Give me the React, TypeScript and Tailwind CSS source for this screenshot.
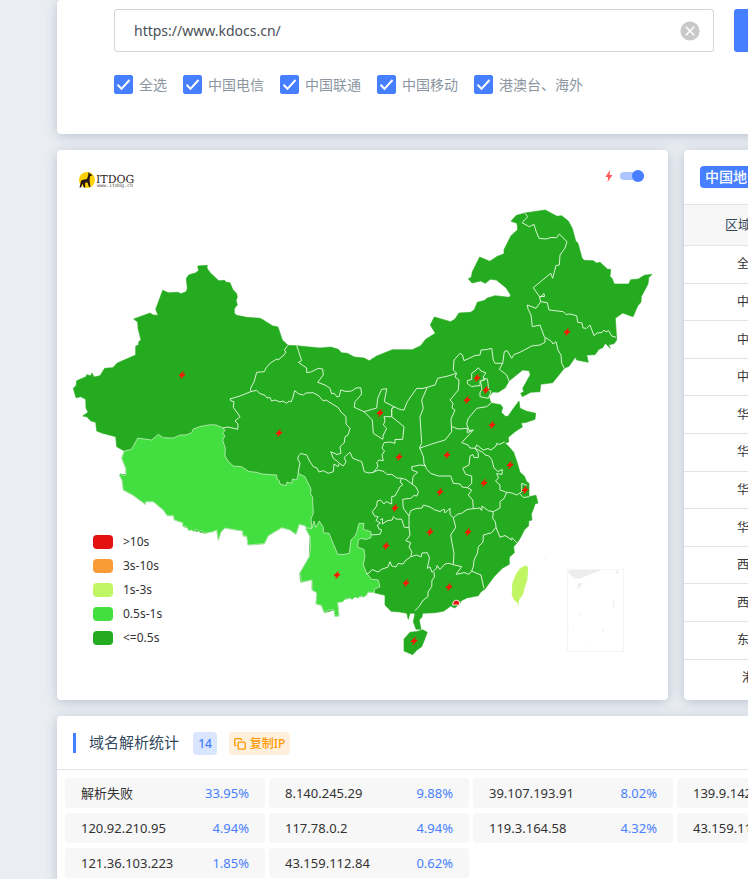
import React from "react";

const carriers = ["全选", "中国电信", "中国联通", "中国移动", "港澳台、海外"];

const regions = ["全国", "中国电信", "中国联通", "中国移动", "华北", "华东", "华中", "华南", "西南", "西北", "东北"];

const legend = [
  { color: "bg-[#e41111]", label: ">10s" },
  { color: "bg-[#f99b37]", label: "3s-10s" },
  { color: "bg-[#c0f563]", label: "1s-3s" },
  { color: "bg-[#43df40]", label: "0.5s-1s" },
  { color: "bg-[#25ab1f]", label: "<=0.5s" },
];

const stats: [string, string][] = [
  ["解析失败", "33.95%"],
  ["8.140.245.29", "9.88%"],
  ["39.107.193.91", "8.02%"],
  ["139.9.142", ""],
  ["120.92.210.95", "4.94%"],
  ["117.78.0.2", "4.94%"],
  ["119.3.164.58", "4.32%"],
  ["43.159.11", ""],
  ["121.36.103.223", "1.85%"],
  ["43.159.112.84", "0.62%"],
];

const mainland =
  "M73.3 388.3L76 385.7 76.7 380.7 86 376.7 86.7 374.7 90.7 375.7 92 373 94 377 100 375.7 104.7 368.3 112.7 367.7 117.3 363 135.7 355 135.7 346.3 138.7 344.7 138.7 341.7 141 340 138 328.3 137.7 322 133.7 319 150 313 153.3 315 158 315.3 155.7 309.3 162.7 290.3 168.3 292.7 178.3 292.3 180.7 293.7 186 291.7 187.3 288.3 186.3 278.3 189 274.7 195.3 273 198.5 270.7 197.7 266 207.3 265.3 207 268 209.5 272 215 277.3 218.7 280.7 224.7 280.3 225.7 282 230 282.7 232.7 289.3 236.7 293.7 237.3 297.7 236 300 237.3 304.7 234.3 308.7 234.3 313.3 236.7 315.3 246.7 317.3 260 318.3 263.3 320 272.3 325.7 278 327 281 336 282.3 340 288 345.3 296.7 345.7 320 348 330.7 347 338.3 349.3 341.3 352.7 347.3 353.3 354.3 357 364 358 369.3 360.7 376.7 356 392.3 349.7 412.3 349.7 420.7 345.7 425.7 339.3 435.3 333.3 430.3 325 434.3 317 450.7 321.7 455 319 459 313 470.7 312.3 474.3 309.7 477.3 302.3 485 300.3 486.7 298.3 495 295.7 509.3 297.3 510.7 295 506 287.7 496.3 280 490.3 279.3 485.3 283.3 480.7 281 472 283 468.3 278.7 471.3 277.3 472.3 271.7 479.7 257 489.7 261.3 497 256.5 504 253.7 504 249.7 511 235.7 517.7 229.7 517 223.3 511 221.3 516 215.5 525 213 545.3 210 557 216.3 561.7 215.7 568.3 221 572.3 228.3 575.7 241 578 243.3 580.3 251.7 582 258 584 260.3 593.3 260.7 596.7 263 600 262.3 607.7 269.3 610.7 269.3 610 276.7 612 278.3 614.3 284 628.7 284 630.7 279.7 638.3 279 644.3 275.3 652 274.3 648.7 277.7 648 284 641.3 296.7 641 302 637.7 306 633 316.7 622.7 313 615.3 318.3 616 328.3 616.7 340 614 343.7 608.7 344.7 610.3 348.3 605.3 343.3 602.7 347.7 599 349.3 595 354.7 586.7 355 588.3 362.3 576.7 360 575.3 357.3 569 366.3 564.3 368.3 552.7 382.7 540.7 384.3 540 391.7 530.7 392.3 522.3 396.7 520.7 393.3 523.7 391.7 522.7 388.3 530.3 374.7 529 370.7 522.7 370 508.7 381.3 505.3 387.7 498.3 392.3 492.7 392 489 396.7 491 403 500.7 404.7 502.7 407.7 501.3 412.3 505.3 416.3 508 416.3 513 409 519 401 520 408.3 526.7 411.3 535.7 413.3 535 419.3 526.7 422.3 521.3 423 522.3 427 516 431 508.3 437.3 508.7 442 504.7 443.3 507.3 445 513.7 452.3 517 462 520 472.3 524.3 476 526.7 481.7 529 483.3 529 496.7 536 495.3 538 503 535 504 533.3 509.3 531.3 514 532 520 528.7 521 528.7 525.7 524.3 530 521 536.7 519 540 516.7 543.3 513.7 546.7 514.3 552.7 509.3 557.3 509.3 564.3 502.3 568.3 494 576.7 485 589 481 591.7 478.3 595.7 466.7 598 461 601 459.3 604.3 454.7 608 450.7 606 444 611 435 612.7 422.7 613.3 422 617 419.3 620 421 629.3 416 629.3 413.3 621.7 415 613.3 410 613.3 408.3 619.3 406.7 613.3 400 612 391 611.3 385 605 385 595.3 374.3 592.7 368.3 592 366 595.7 355 597.3 345 599.3 337.7 602.7 339 616 334.7 616.3 334 610 324.3 612.7 321.3 605.3 316 604 316.7 592.7 312 590 312 580 300.7 582.3 299.7 573.3 309.3 556.7 310 536.7 305.3 526 299.3 524.3 296 534.3 290 530 281.7 527.7 268.3 535.7 264.3 543.7 248 545 246.7 536.3 243 536 242.7 531 236 530 225 528 221 532 218.3 540.3 216.7 530 205 533.3 191.7 530 182.7 526 182.7 522.7 174.3 520 173.3 515.7 167.3 515.7 163.3 510 153.3 501.7 145.7 501.7 145.3 504.3 132.7 495 123.3 490 122 480 119.3 475 126 474.3 125.7 468.3 121.7 458.3 124.3 451 116.7 446.7 115.7 436.7 102.7 433.3 96.7 431 95.7 422.3 91 421 86.7 416.7 82.7 416 88 412.3 86 408 85.7 399.3 80.7 396.7 76 397.7Z";

const tibet =
  "M124.3 451L131.7 449.3 137.7 438 151.7 440 158.3 434.3 163.3 437.7 173.3 438 180 435 186 435 191.7 432.7 193.3 429 200 426.5 210 424.7 216 425 223.3 428 225 430.7 222.7 433 225 436 222.7 440 225.3 448.3 225 456 228 461 233.3 466 241.7 466.7 249 471.5 256.7 472.3 262 474 276.7 475 277 479 279.3 480.7 280 484 286 485.7 287 482 291.7 483.3 292.5 479 296.7 480 298.3 473.3 305 476.7 311 489 310.5 494 312.5 497 313.3 513.3 311 519 312 528.3 306.7 529.3 305.3 526 299.3 524.3 296 534.3 290 530 281.7 527.7 268.3 535.7 264.3 543.7 248 545 246.7 536.3 243 536 242.7 531 236 530 225 528 221 532 218.3 540.3 216.7 530 213 532 205 533.3 201 530.5 199 532 196 529 194 532 191.7 530 188.5 531 187 527 182.7 526 182.7 522.7 174.3 520 173.3 515.7 167.3 515.7 163.3 510 153.3 501.7 145.7 501.7 145.3 504.3 132.7 495 123.3 490 122 480 119.3 475 121 473 124 476 126 474.3 125.7 468.3 121.7 458.3Z";

const yunnan =
  "M305 528L312 528.3 314 521 315.7 527.3 319.3 521 323.3 527.3 323.3 532.7 329 533.3 337.7 554.3 343 554.5 349.3 553.3 351 540 355 536 356.7 532.7 358 527 359 523.3 364 523.3 363.3 529.3 371 531.7 371 537.7 366 539.5 361 538.5 358.3 540 357.7 547.3 364 549.3 365 556.7 363.3 565 366.7 573.3 371.7 579.3 378.3 580 380 586.7 374.3 589.3 374.3 592.7 368.3 592 366 595.7 363.5 597.5 361 595.5 358 598.5 355 597.3 352 600 350 598 345 599.3 343 602 337.7 602.7 339 616 334.7 616.3 334 610 329 610 324.3 612.7 321.3 605.3 316 604 316.7 592.7 312 590 312 580 300.7 582.3 301 578 299.7 573.3 309.3 556.7 310.5 548 310 536.7Z";

// Provincial boundaries inside the mainland outline.
const borders = [
  "M288 345.3L284.3 350 286 352 284 355 278 360 276.7 359 270 363.3 266 368 264.3 371.7 256.7 372.3 254 382 250.7 388 250.7 391.7 240 396 230 399 231 401 234 401.7 233.3 407.3 240 416.7 235 421 238 424 237.7 429.3 228 427 222.7 428",
  "M250.7 391.7L256.7 390.3 259.3 393.3 265 395.3 267 398 270 397.5 271.7 401 275 400 280 402 283 401 286.7 403.3 289 401 291 402 292.7 398.3 294.7 390.7 299 394 303.3 395 306 393 313.3 392.7 319 396 323.3 401 326 400 330 402.5 338.3 407.7 341 412 346 416.7 346 424 350 428.3 348 435 345 436.7 344.3 442.7 340 446.7 341 453.3 337 454.5 330.7 451.7 333.3 458.3 337 461 339.3 463.3 338 466.7 334 464 333.3 471.7 328.3 473.3 323.3 470.7 319 472 317 468 313.3 466.7 309.5 461 306.7 455 301 453.5 298.3 456 297.8 459 300 463.3 298 473.3",
  "M296.7 345.7L301.7 360.7 298.3 362.3 306.7 368 306.7 372.7 311.7 371.7 318.3 368.3 322.7 369 323.3 375 317.7 382.3 325 385 330 388.3 331.7 394 334 393 337 397 339.3 396.3 340.7 390 346 391.5 351.7 391 356 388 360.7 387.7 361.7 394 355 401.7 354.3 407.3 364 411.7",
  "M364 411.7L376.7 408 377.7 398.3 381.7 389.3 386.7 388.7 384.3 401.7 394 406.7 391.7 409 391.7 416.7 384 416.7 385 421 383.3 425 386.7 428.3 383.3 435 382.7 439.3 373.3 433.3 372.3 420 369 416.5 364 411.7",
  "M391.7 416.7L404 426.7 402.7 439.3 395 439.5 395 443.3 390 442 384 442.7 382 448 384.5 451 382 455 383.3 460.7 379 460 376.7 462.7 378 466 376.7 468.3 373.3 472.3",
  "M339.3 463.3L343.3 466 346 462 344.3 457.3 350 452.3 352.7 458.3 361.7 461.7 364.3 471.7 369 473 373.3 472.3 378.3 470 384 471.5 387 474.5 391.7 474.3 397 478 401.7 478.3 406 479.5 412.3 484.3",
  "M401.7 478.3L400 482 403 484.5 400 486.7 395 496 391.7 496.5 391.7 504 386 501.5 384 504 380.5 500 377.3 501 376.7 506 372.3 511.7 374.5 516 378.3 516.7 376 520.5 380.5 523 377.3 525 379 529 381.7 530 380 534.3 371 535",
  "M380 520L382.5 518.5 382.5 524 385 522 388 520.5 392.3 520 393.3 516.5 396 519 401.7 519.3 404.3 527.3 409 527.7 409 516 403.3 508.3 402.7 499.3 410.7 498.3 414 495.5 417 496 418.3 491.7 416 487 412.3 484.3",
  "M409 527.7L410 535 408 538 405.7 540.7 409 542 410.7 542.7 409 547 412 552 410.7 556.7 405 561 403.3 564 398 563.5 396 567 391.7 566 390 561.7 388 567 381.7 569.3 378 572 372 569.5 369 573 366 574",
  "M410.7 556.7L416.7 555 421 557 422 553 427.3 552.7 429.5 558 427.3 568.3 430 567 432 572.3 436.7 568.3 437 565.5 440 569.5 445 564 449 563.3 453.3 564.7 461.7 566.7 456 574.3 461 573.5 464 572.5 469 574.3 471.7 571 476 573 481 575 482.5 582 484 588.3",
  "M434 572.3L434.5 577 432 580 431.7 586.7 428 592 428 596.7 423.3 600 419 606.5 415 610.7",
  "M409 516L410.7 510.7 416 508.5 422 508 423.3 505 430 507 435 510 440 511.5 444 509 445 513 450 508.3 450 514.5 453.3 517.7 458 514 461.7 513.3 467 509.5 473.3 508.7 472.7 500 468.3 495 471.7 490 467.3 487.7 462 487 460 484 453.3 483.3 450.7 476 438.3 476 431 473.5 426.7 469.3 424 463.3 423.5 457 420 448.3",
  "M425.7 465.7L420 465 411.7 466.7 412 470 417.7 472.3 413 476.5 412.3 484.3",
  "M419.3 448.3L421.7 443.3 420 416.7 423.3 408.3 421.7 400 427.3 387.3M391.7 416.7L391.7 409 394 406.7 400 409.5 404 410 407.3 401.7 416.7 388.3 422 388.5 427.3 387.3 435 385 437.7 378.3 448 376 456.7 373.3 455 377 459 380 458.3 390 450 400 453 403 452 408 455 410 451 419 451.7 431.7 445 440 431.7 444 419.3 448.3",
  "M456.7 373.3L453.3 370 454 360 460 353.3 462.5 355 464 360.7 475 355.5 480 355 481 350 487 349.5 491.7 348.3 493.3 360 495 363.3 502.7 363.3 499.3 369.3 506.7 375 509 381M502.7 363.3L504.3 351.7 507 350.5 511.7 358.3 514 354.5 520 352.3 531.7 346 540 345 545 342.3 545 337.3",
  "M491 403L486.7 406.7 476.7 408.3 472 414 468.3 418.3 466.7 424 469 430.5 473.3 430 461.7 442.7 468 445 470 448 475 448.3 476.7 445 483.3 450 488 448.5 491 450 496 446 496.7 443.3 499 444.5 504.7 442M451.7 426.5L458 429 467.3 428.3 467.3 432.7 473.3 430",
  "M475 448.3L478.3 453 478.3 457.5 474 457.5 473 454.5 470 456 469 465 462.7 468.3 465.7 474.3 471.7 476 471.7 483.3 467.3 487.7",
  "M475 448.3L483.3 452.7 485 455 489 456 491.7 459.3 494 468 498 471.5 502.3 469.5 502 474.5 496.7 473.5 498.5 478 495.5 481 500 485 500 490 506.7 492.3 512 493 516.7 495 521.7 491.7 521.7 483.3 527 485.5M520 494L523.3 497.5 529 496.7",
  "M506.7 492.3L504 498.5 500 501.7 500 508 493.3 511.7 488.3 510.7 482 506 481.7 510.5 480 508 473.3 508.7M493.3 511.7L492.7 518.3 495.5 522 496 527.3 500 537.3 505 535.5 511.7 540 512 537.7 516.7 542.7M496 527.3L491.7 532.7 483.3 535 483 542 478.3 546.7 477.5 553 474 560 473.5 566 471.7 571",
  "M453.3 517.7L455.7 527.3 450.7 535 452 543 454 553.3 453.3 564.7",
  "M525 213.3L527.7 216.7 522 222.7 529.3 226.7 534 224.3 536 231 539 238.3 546 239 551 237.5 556.7 237.7 559.3 234 567 241.7 565 248 560 255 559.3 265 556 265.5 552.7 278.3 550.7 273.3 533.3 287.7 540 297.3 544 293.5 544.5 296.5 539.5 296.5 540.7 301.7 547.3 302.7 549 310 563.3 311.7 566 314.5 570 314 576.7 315.7 577.7 322.3 582 323 583 328 586.5 328.3 590 325 594 335.7 597 333 602 332.5 604 330 606 332 608.5 330.5 611.7 336 616 337.3",
  "M540.7 301.7L536 308.3 530 306 527.3 305 528 309 531 315 532.3 326.7 540 325 544.3 336.7 551.7 341.7 553 344 556 341.7 558 350 561 355 561.7 363.3 564.3 368.3",
  "M471.7 373.3L475 371 478.3 367.7 481 371 486 373 483 377 485 380 480 381 480 385.7 475 386 471.7 386.7 467.3 383.5 467.5 380.5 471.7 379.5ZM480.7 381.7L484 378.5 487.3 379 488 383 488.5 390 491 391.5 488.3 398.3 480 396.7 480 392 482 390Z",
];

const nodes = [
  [182, 375], [279, 433], [380, 413], [399, 457], [395, 508], [386, 546], [337, 575], [406, 583],
  [430, 532], [440, 492], [447, 455], [467, 400], [477, 378], [486, 390], [492, 425], [510, 465],
  [484, 483], [525, 490], [468, 532], [449, 587], [414, 641], [567, 332],
];

const bolt = "M1.3 -3.8L-3 .4V1H-.6L-1.2 3.8 3 -.5V-1.100H.6Z";
const card = "bg-white rounded shadow-[0_2px_12px_rgba(45,65,105,0.25)]";

function ChinaMap() {
  return (
    <svg viewBox="57 150 611 550" className="block w-full" role="img" aria-label="中国地图">
      <g fill="#25ab1f" stroke="#25ab1f" strokeWidth=".6">
        <path d={mainland} />
        <path d="M404 639L410 632.3 417 631.5 422.7 629.7 427.3 632.3 424 641 421.7 646.7 417 650 412.7 654.7 404 651Z" />
      </g>
      <g fill="#43df40" stroke="#d8f4d5" strokeWidth=".7">
        <path d={tibet} />
        <path d={yunnan} />
      </g>
      <g fill="none" stroke="#d8f4d5" strokeWidth="1" strokeLinejoin="round">
        {borders.map((d) => <path key={d} d={d} />)}
      </g>
      <path d="M526 565.3L528.3 567.7 527.3 580 525 587 522.7 595 519 600 518.3 606.7 517.3 602.7 514 600 511.7 595 512.3 583.3 516 574 520 568.3Z" fill="#c0f563" />
      <g fill="#ededed">
        <path d="M567.500 571.500L572 569.5H603L580 578.5 574 578.5Z" />
        <path d="M578 583.500l5-1-3 5-2.500 1zM615 570.500h4l-1.500 4.500zM613 601l1.200-2v8l-1.200 1zM601.500 632l3-5-1 4zM578.500 616l3-4-1 3zM573 627l1 4h-1zM588 643l4-1-2 1z" />
      </g>
      <rect x="567.5" y="569.5" width="56" height="82" fill="none" stroke="#f5f5f5" />
      <circle cx="545" cy="558.500" r=".8" fill="#eee" />
      <g fill="#ff1500" stroke="#ff1500" strokeWidth=".5">
        {nodes.map(([x, y]) => <path key={`${x}-${y}`} d={bolt} transform={`translate(${x} ${y})`} />)}
      </g>
      <path d="M452.500 605l1-3.500 2.500-1.500 3 1 .8 4z" fill="#e41111" stroke="#f0e5e0" strokeWidth="1" />
      <g>
        <circle cx="87" cy="180" r="8" fill="#fcd206" />
        <path d="M79.500 187.500l1.500-6.500 1-1 5-1 1.200-3.500.4-3.500 1.200 1.500 2.700 1.700-2.500 1-.4 4.300.8 6.500h-1.400l-1.500-4.500-2.500.3.300 4.700h-1.400l-1.400-4-1.500 4z" fill="#241715" />
        <text x="96" y="183" fontSize="12" fontFamily="DejaVu Serif, serif" fill="#302522" textRendering="geometricPrecision">
          <tspan fontSize="11">ITDOG</tspan>
        </text>
        <text x="97" y="187" fontSize="5" fontFamily="DejaVu Sans Mono, monospace" fill="#55504e" textRendering="geometricPrecision">www.itdog.cn</text>
      </g>
    </svg>
  );
}

export default function App() {
  return (
    <div className="min-h-screen overflow-hidden bg-[#eaeef3] pl-[57px] font-['Noto_Sans','Noto_Sans_CJK_SC',sans-serif] text-[13px] text-[#333]">
      <main className="flex w-[1240px] flex-col gap-4">
        <section className={`${card} pt-[9px] pr-[57px] pb-10 pl-[57px]`}>
          <form className="flex gap-5" onSubmit={(e) => e.preventDefault()}>
            <div className="relative w-[600px]">
              <input
                type="text"
                aria-label="网址"
                defaultValue="https://www.kdocs.cn/"
                className="h-[43px] w-full rounded-[3px] border border-[#ced4da] bg-white px-[19px] text-[14px] text-[#495057] outline-none"
              />
              <button type="button" aria-label="清除" className="absolute top-3 right-3.5">
                <svg viewBox="0 0 20 20" className="block size-5">
                  <circle cx="10" cy="10" r="9.600" fill="#c9c9c9" />
                  <path d="M5.800 5.800l8.400 8.400M14.200 5.800l-8.400 8.400" stroke="#fff" strokeWidth="1.500" />
                </svg>
              </button>
            </div>
            <button type="submit" aria-label="测试" className="h-[43px] w-28 rounded-[3px] bg-[#467fff]" />
          </form>
          <div className="mt-[22px] flex gap-4">
            {carriers.map((name) => (
              <label key={name} className="flex h-5 items-center gap-1.5 text-[14px] text-[#8b96a1]">
                <span className="relative block size-[19px]">
                  <input type="checkbox" defaultChecked className="peer block size-[19px] appearance-none rounded-[2px] border border-[#467fff] checked:bg-[#467fff]" />
                  <svg viewBox="0 0 19 19" className="pointer-events-none absolute inset-0 hidden peer-checked:block">
                    <path d="M3.500 9.800l4 4 8-8.800" fill="none" stroke="#fff" strokeWidth="2" />
                  </svg>
                </span>
                {name}
              </label>
            ))}
          </div>
        </section>

        <div className="grid grid-cols-[611px_1fr] gap-4">
          <section className={`${card} relative`}>
            <ChinaMap />
            <label className="absolute top-5 right-6 flex items-center gap-[7px]">
              <svg viewBox="0 0 8 12" className="h-3 w-2">
                <path d="M5 0L.5 7h2.700L2.500 12 7.500 5H4.500z" fill="#ff5656" />
              </svg>
              <input
                type="checkbox"
                aria-label="节点标记"
                defaultChecked
                className="relative h-2 w-[24px] appearance-none rounded-full bg-[#adc6ff] before:absolute before:-top-0.5 before:right-0 before:size-3 before:rounded-full before:bg-[#467fff]"
              />
            </label>
            <ul className="absolute bottom-[50px] left-9">
              {legend.map((item) => (
                <li key={item.label} className="flex h-6 items-center gap-2.5 text-[12px] leading-6 text-[#333]">
                  <span className={`${item.color} h-3.5 w-5 rounded`} />
                  {item.label}
                </li>
              ))}
            </ul>
          </section>

          <section className={`${card} overflow-hidden`}>
            <h2 className="mt-4 mb-4 ml-4 inline-block rounded bg-[#467fff] px-[5px] text-[14px] leading-[22px] font-medium text-white">中国地区</h2>
            <table className="h-[492px] w-full border-collapse">
              <thead>
                <tr className="h-[41px] border-y border-[#dee5ec] bg-[#f7f7f7]">
                  <th className="py-0 pl-[41px] text-left font-normal text-[#34495e]">区域</th>
                </tr>
              </thead>
              <tbody>
                {regions.map((name) => (
                  <tr key={name} className="border-b border-[#dee5ec]">
                    <td className="py-0 pl-[53px] text-[12px]">{name}</td>
                  </tr>
                ))}
                <tr>
                  <td className="py-0 pl-[58px] text-[12px]">港澳台</td>
                </tr>
              </tbody>
            </table>
          </section>
        </div>

        <section className={`${card} pb-4`}>
          <header className="flex h-[54px] items-center border-b border-[#e3e5e8] px-4">
            <span className="mr-[13px] h-5 w-[3px] bg-[#467fff]" />
            <h2 className="text-[15px] text-[#34495e]">域名解析统计</h2>
            <span className="mt-0.5 ml-3.5 h-[23px] w-6 rounded bg-[#dae5ff] text-center text-[12px] leading-[23px] font-medium text-[#467fff]">14</span>
            <button type="button" className="mt-0.5 ml-3 flex h-[23px] w-[61px] items-center justify-center gap-1 rounded bg-[#fff0dd] text-[12px] font-medium text-[#ff9800]">
              <svg viewBox="0 0 12 12" className="size-3" fill="none" stroke="#ff9800" strokeWidth="1.300">
                <rect x="4.200" y="4.200" width="7" height="7" rx="1" />
                <path d="M2.500 7.700H1.700a1 1 0 0 1-1-1v-5a1 1 0 0 1 1-1h5a1 1 0 0 1 1 1v.8" />
              </svg>
              复制IP
            </button>
          </header>
          <ul className="grid grid-cols-[repeat(4,200px)] gap-x-1 gap-y-[5px] px-2 pt-2">
            {stats.map(([host, share]) => (
              <li key={host} className="flex h-[30px] items-center justify-between rounded bg-[#f7f7f7] px-4 pt-px">
                <span>{host}</span>
                <span className="text-[#467fff]">{share}</span>
              </li>
            ))}
          </ul>
        </section>
      </main>
    </div>
  );
}
